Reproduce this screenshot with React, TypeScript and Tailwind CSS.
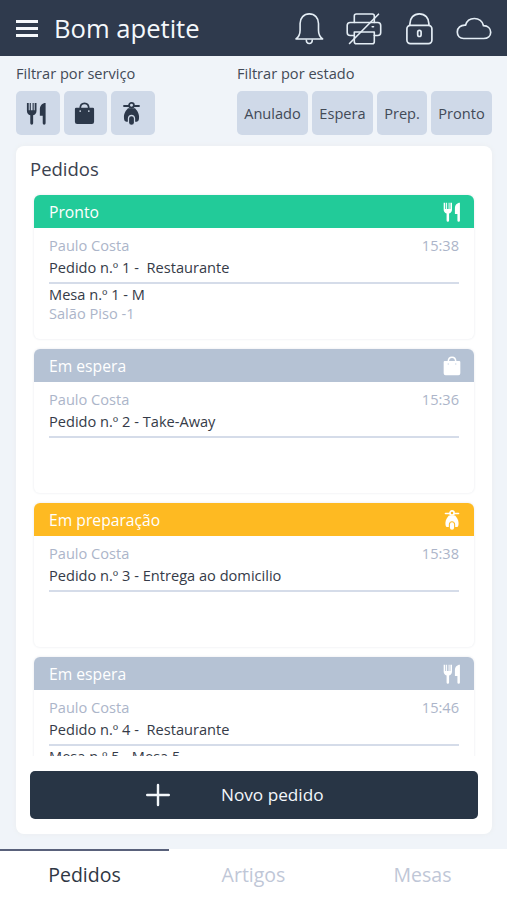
import React, { useState } from "react";

type Service = "restaurant" | "takeaway" | "delivery";
type Status = "ready" | "waiting" | "preparing";

interface Order {
  id: number;
  status: Status;
  service: Service;
  user: string;
  time: string;
  title: string;
  table?: string;
  room?: string;
}

const orders: Order[] = [
  { id: 1, status: "ready", service: "restaurant", user: "Paulo Costa", time: "15:38", title: "Pedido n.º 1 -  Restaurante", table: "Mesa n.º 1 - M", room: "Salão Piso -1" },
  { id: 2, status: "waiting", service: "takeaway", user: "Paulo Costa", time: "15:36", title: "Pedido n.º 2 - Take-Away" },
  { id: 3, status: "preparing", service: "delivery", user: "Paulo Costa", time: "15:38", title: "Pedido n.º 3 - Entrega ao domicilio" },
  { id: 4, status: "waiting", service: "restaurant", user: "Paulo Costa", time: "15:46", title: "Pedido n.º 4 -  Restaurante", table: "Mesa n.º 5 - Mesa 5" },
];

const statusInfo: Record<Status, { label: string; color: string }> = {
  ready: { label: "Pronto", color: "bg-[#22cb99]" },
  waiting: { label: "Em espera", color: "bg-[#b5c2d4]" },
  preparing: { label: "Em preparação", color: "bg-[#feba22]" },
};

const services: Service[] = ["restaurant", "takeaway", "delivery"];

const states = [
  { label: "Anulado", width: "w-[71px]" },
  { label: "Espera", width: "w-[61px]" },
  { label: "Prep.", width: "w-[50px]" },
  { label: "Pronto", width: "w-[61px]" },
];

const tabs = ["Pedidos", "Artigos", "Mesas"];

const ServiceIcon = ({ service, className }: { service: Service; className: string }) => {
  if (service === "restaurant") {
    return (
      <svg viewBox="0 0 24 24" className={className} fill="currentColor">
        <path d="M2 1v8c0 2.500 1.400 4.200 3.500 4.800v8.400a1.500 1.500 0 0 0 3 0v-8.400C10.600 13.200 12 11.500 12 9V1h-1.900v7.500h-1V1H7.900v0h-1.800v0H4.900v7.500h-1V1zM6.100 1h1.800v7.500H6.100z" />
        <path d="M21.500 1c-3.500 0-6 2.800-6 6.500v6.800h3v7.900a1.500 1.500 0 0 0 3 0z" />
      </svg>
    );
  }
  if (service === "takeaway") {
    return (
      <svg viewBox="0 0 24 24" className={className}>
        <path d="M3.300 6h17.400a1.300 1.300 0 0 1 1.300 1.300V20.700a2.300 2.300 0 0 1-2.300 2.300H4.300A2.300 2.300 0 0 1 2 20.700V7.300A1.300 1.300 0 0 1 3.300 6z" fill="currentColor" />
        <path d="M7.500 7C7.500 3.800 9.300 1.500 12 1.500S16.500 3.800 16.500 7" fill="none" stroke="currentColor" strokeWidth="1.800" />
        <circle cx="7.500" cy="9.500" r=".9" className="fill-[#cfd9e8]" />
        <circle cx="16.500" cy="9.500" r=".9" className="fill-[#cfd9e8]" />
      </svg>
    );
  }
  return (
    <svg viewBox="0 0 24 24" className={className} fill="none" stroke="currentColor" strokeLinecap="round">
      <path d="M4.200 4.200h5M14.800 4.200h5" strokeWidth="2" />
      <circle cx="12" cy="3.500" r="2.500" strokeWidth="1.900" />
      <path d="M8.300 6.500h7.400c1.400 1.800 4.200 4.500 4.200 9 0 3.500-.7 5-2.500 5h-1.600v-3.200c0-2.300-1.600-3.900-3.800-3.900s-3.800 1.600-3.800 3.900v3.200H6.600c-1.800 0-2.500-1.500-2.500-5 0-4.500 2.800-7.200 4.200-9z" fill="currentColor" stroke="none" />
      <rect x="9.500" y="14.800" width="5" height="9" rx="2.500" fill="currentColor" stroke="none" />
    </svg>
  );
};

const HeaderIcons = () => (
  <div className="flex items-center gap-[18px] text-[#e4edf5]">
    <svg viewBox="0 0 37 36" className="w-[37px] h-9" fill="none" stroke="currentColor" strokeWidth="1.600" strokeLinejoin="round">
      <path d="M6 29c2.900-2.300 4.100-5 4.100-8.800v-6.700c0-5.500 3.700-9.600 9.200-9.600s9.200 4.100 9.200 9.600v6.700c0 3.800 1.200 6.500 4.100 8.800z" />
      <path d="M16.300 29.500c0 2.700 1.100 4 3 4s3-1.300 3-4" />
    </svg>
    <svg viewBox="0 0 37 36" className="w-[37px] h-9" fill="none" stroke="currentColor" strokeWidth="1.600" strokeLinejoin="round" strokeLinecap="round">
      <path d="M9.300 12.500V6a2 2 0 0 1 2-2h16a2 2 0 0 1 2 2v6.500" />
      <path d="M9.300 25.500H5.200a3 3 0 0 1-3-3v-7a3 3 0 0 1 3-3h27.500a3 3 0 0 1 3 3v7a3 3 0 0 1-3 3h-3.400" />
      <path d="M9.300 22h20v9.800a2 2 0 0 1-2 2h-16a2 2 0 0 1-2-2zM27.200 16.800h1.300" />
      <path d="M4.500 33.500L33.500 4.200" />
    </svg>
    <svg viewBox="0 0 37 36" className="w-[37px] h-9" fill="none" stroke="currentColor" strokeWidth="1.700">
      <rect x="6.900" y="15.300" width="25" height="18.300" rx="3.500" />
      <path d="M9.900 15.300v-1.500c0-5.800 3.800-9.900 9.500-9.900s9.500 4.100 9.500 9.900v1.500" />
      <rect x="17.700" y="20.300" width="3.400" height="6.200" rx="1.700" />
    </svg>
    <svg viewBox="0 0 37 36" className="w-[37px] h-9" fill="none" stroke="currentColor" strokeWidth="1.700">
      <path d="M8.600 28.500h20.100c4 0 7-2.500 7-6.200 0-3.900-3-6.500-7.200-6.600C27.500 11.500 23.800 8.500 19.400 8.500c-4.500 0-7.800 2.700-8.900 6.700C5.600 15 2.300 17.700 2.300 22c0 3.900 2.600 6.500 6.300 6.500z" />
    </svg>
  </div>
);

const OrderCard = ({ order }: { order: Order }) => {
  const info = statusInfo[order.status];

  return (
    <div className="w-[440px] h-36 shrink-0 rounded-md bg-white shadow-[0_0_2px_1px_#f4f5f7]">
      <div className={`flex items-center justify-between h-[33px] pl-[15px] pr-[12px] rounded-t-md text-white ${info.color}`}>
        <span className="pt-[3px] text-[15.7px]">{info.label}</span>
        <ServiceIcon service={order.service} className="w-5 h-5" />
      </div>
      <div className="px-[15px] pt-[6px] text-[14.6px]">
        <div className="flex justify-between leading-[22px] text-[#acb5c9]">
          <span>{order.user}</span>
          <span>{order.time}</span>
        </div>
        <p className="h-[26px] leading-[22px] whitespace-pre text-[#353b48]">{order.title}</p>
        <div className="h-0.5 bg-[#d5dce9]" />
        <p className="leading-[20px] text-[#353b48]">{order.table}</p>
        <p className="leading-[19px] text-[#acb5c9]">{order.room}</p>
      </div>
    </div>
  );
};

const App: React.FC = () => {
  const [activeTab, setActiveTab] = useState("Pedidos");

  return (
    <div className="flex flex-col w-[507px] h-[900px] overflow-hidden bg-[#f0f4f9] font-['Open_Sans',sans-serif]">
      <header className="flex items-center justify-between h-14 shrink-0 pl-4 pr-[15px] bg-[#2f3a4d]">
        <div className="flex items-center">
          <div className="flex flex-col gap-1 w-[22px] mr-4 pt-0.5">
            <span className="h-[3px] bg-[#f5f8fc]" />
            <span className="h-[3px] bg-[#f5f8fc]" />
            <span className="h-[3px] bg-[#f5f8fc]" />
          </div>
          <h1 className="pt-0.5 text-[25.6px] text-[#f5f8fc]">Bom apetite</h1>
        </div>
        <HeaderIcons />
      </header>

      {/* Filters */}
      <section className="flex justify-between h-[90px] shrink-0 pl-4 pr-[15px] pt-[6px] text-[14.6px] text-[#424a57]">
        <div>
          <h2 className="leading-[22px]">Filtrar por serviço</h2>
          <div className="flex gap-1 mt-[7px]">
            {services.map((service) => (
              <button key={service} className="flex items-center justify-center w-[43.500px] h-11 pr-0.5 rounded-[5px] bg-[#cfd9e8] text-[#2c384a]">
                <ServiceIcon service={service} className="w-[23px] h-[23px]" />
              </button>
            ))}
          </div>
        </div>
        <div>
          <h2 className="leading-[22px]">Filtrar por estado</h2>
          <div className="flex gap-1 mt-[7px]">
            {states.map((state) => (
              <button key={state.label} className={`h-11 pt-0.5 rounded-[5px] bg-[#cfd9e8] ${state.width}`}>
                {state.label}
              </button>
            ))}
          </div>
        </div>
      </section>

      {/* Orders */}
      <main className="flex flex-col h-[688px] shrink-0 ml-4 mr-[15px] px-[14px] rounded-lg bg-white shadow-[0_0_4px_1px_#eceff2]">
        <h2 className="h-[45px] pt-[10px] text-[18.5px] leading-[26px] text-[#3b424f]">Pedidos</h2>
        <div className="flex flex-col gap-[10px] h-[565px] shrink-0 pt-1 pl-1 overflow-hidden">
          {orders.map((order) => (
            <OrderCard key={order.id} order={order} />
          ))}
        </div>
        <button className="flex items-center h-[48px] shrink-0 mt-[15px] pl-[116px] rounded-[5px] bg-[#283545] text-[17.2px] text-[#f3f7fb]">
          <svg viewBox="0 0 24 24" className="w-6 h-6 mr-[51px]" fill="none" stroke="currentColor" strokeWidth="2.400" strokeLinecap="round">
            <path d="M1.200 12h21.600M12 2v20" />
          </svg>
          Novo pedido
        </button>
      </main>

      <nav className="flex h-[51px] shrink-0 mt-[15px] bg-white">
        {tabs.map((tab) => (
          <button
            key={tab}
            onClick={() => setActiveTab(tab)}
            className={`flex-1 border-t-2 pb-0.5 text-[19.5px] ${
              activeTab === tab ? "border-[#59617b] text-[#303744]" : "border-transparent text-[#bfc7d7]"
            }`}
          >
            {tab}
          </button>
        ))}
      </nav>
    </div>
  );
};

export default App;
